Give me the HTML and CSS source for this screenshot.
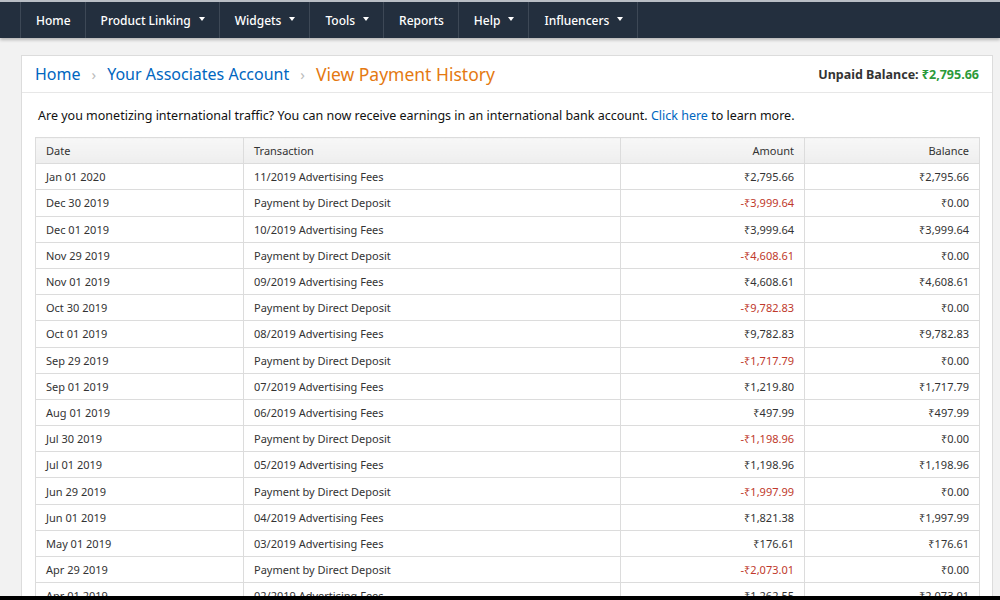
FILE: index.html
```html
<!DOCTYPE html>
<html lang="en">
<head>
    <meta charset="UTF-8">
    <title>View Payment History</title>
    <link rel="stylesheet" href="styles.css">
</head>
<body>
    <nav class="top-nav">
        <span class="nav-spacer"></span>
        <a class="nav-item" href="#">Home</a>
        <a class="nav-item" href="#">Product Linking <span class="caret"></span></a>
        <a class="nav-item" href="#">Widgets <span class="caret"></span></a>
        <a class="nav-item" href="#">Tools <span class="caret"></span></a>
        <a class="nav-item" href="#">Reports</a>
        <a class="nav-item" href="#">Help <span class="caret"></span></a>
        <a class="nav-item" href="#">Influencers <span class="caret"></span></a>
    </nav>

    <main class="page">
        <div class="card">
            <div class="card-header">
                <div class="breadcrumbs">
                    <a href="#">Home</a>
                    <span class="sep">&rsaquo;</span>
                    <a href="#">Your Associates Account</a>
                    <span class="sep">&rsaquo;</span>
                    <span class="current">View Payment History</span>
                </div>
                <div class="unpaid">Unpaid Balance: <span class="unpaid-amount">₹2,795.66</span></div>
            </div>

            <div class="card-body">
                <p class="notice">Are you monetizing international traffic? You can now receive earnings in an international bank account. <a href="#">Click here</a> to learn more.</p>

                <table class="history">
                    <colgroup>
                        <col class="col-date">
                        <col class="col-trans">
                        <col class="col-amount">
                        <col class="col-balance">
                    </colgroup>
                    <thead>
                        <tr>
                            <th>Date</th>
                            <th>Transaction</th>
                            <th class="num">Amount</th>
                            <th class="num">Balance</th>
                        </tr>
                    </thead>
                    <tbody>
                        <tr><td>Jan 01 2020</td><td>11/2019 Advertising Fees</td><td class="num">₹2,795.66</td><td class="num">₹2,795.66</td></tr>
                        <tr><td>Dec 30 2019</td><td>Payment by Direct Deposit</td><td class="num neg">-₹3,999.64</td><td class="num">₹0.00</td></tr>
                        <tr><td>Dec 01 2019</td><td>10/2019 Advertising Fees</td><td class="num">₹3,999.64</td><td class="num">₹3,999.64</td></tr>
                        <tr><td>Nov 29 2019</td><td>Payment by Direct Deposit</td><td class="num neg">-₹4,608.61</td><td class="num">₹0.00</td></tr>
                        <tr><td>Nov 01 2019</td><td>09/2019 Advertising Fees</td><td class="num">₹4,608.61</td><td class="num">₹4,608.61</td></tr>
                        <tr><td>Oct 30 2019</td><td>Payment by Direct Deposit</td><td class="num neg">-₹9,782.83</td><td class="num">₹0.00</td></tr>
                        <tr><td>Oct 01 2019</td><td>08/2019 Advertising Fees</td><td class="num">₹9,782.83</td><td class="num">₹9,782.83</td></tr>
                        <tr><td>Sep 29 2019</td><td>Payment by Direct Deposit</td><td class="num neg">-₹1,717.79</td><td class="num">₹0.00</td></tr>
                        <tr><td>Sep 01 2019</td><td>07/2019 Advertising Fees</td><td class="num">₹1,219.80</td><td class="num">₹1,717.79</td></tr>
                        <tr><td>Aug 01 2019</td><td>06/2019 Advertising Fees</td><td class="num">₹497.99</td><td class="num">₹497.99</td></tr>
                        <tr><td>Jul 30 2019</td><td>Payment by Direct Deposit</td><td class="num neg">-₹1,198.96</td><td class="num">₹0.00</td></tr>
                        <tr><td>Jul 01 2019</td><td>05/2019 Advertising Fees</td><td class="num">₹1,198.96</td><td class="num">₹1,198.96</td></tr>
                        <tr><td>Jun 29 2019</td><td>Payment by Direct Deposit</td><td class="num neg">-₹1,997.99</td><td class="num">₹0.00</td></tr>
                        <tr><td>Jun 01 2019</td><td>04/2019 Advertising Fees</td><td class="num">₹1,821.38</td><td class="num">₹1,997.99</td></tr>
                        <tr><td>May 01 2019</td><td>03/2019 Advertising Fees</td><td class="num">₹176.61</td><td class="num">₹176.61</td></tr>
                        <tr><td>Apr 29 2019</td><td>Payment by Direct Deposit</td><td class="num neg">-₹2,073.01</td><td class="num">₹0.00</td></tr>
                        <tr><td>Apr 01 2019</td><td>02/2019 Advertising Fees</td><td class="num">₹1,262.55</td><td class="num">₹2,073.01</td></tr>
                    </tbody>
                </table>
            </div>
        </div>
    </main>

    <div class="screen-edge"></div>
</body>
</html>
```

FILE: styles.css
```css
html, body {
    height: 100%;
}

body {
    margin: 0;
    display: flex;
    flex-direction: column;
    overflow: hidden;
    background: #f2f2f2;
    font-family: "Noto Sans", "Open Sans", sans-serif;
    color: #111;
}

a {
    text-decoration: none;
}

/* top navigation */
.top-nav {
    flex: none;
    display: flex;
    height: 36px;
    background: #232f3e;
    border-top: 2px solid #b9bec5;
    box-shadow: 0 2px 3px rgba(0, 0, 0, 0.25);
}

.nav-spacer {
    width: 20px;
    border-right: 1px solid #3d4856;
}

.nav-item {
    display: flex;
    align-items: center;
    gap: 8px;
    padding: 0 14px 0 15px;
    border-right: 1px solid #3d4856;
    color: #fff;
    font-size: 12px;
    font-weight: 500;
}

.caret {
    width: 0;
    height: 0;
    border-left: 3.5px solid transparent;
    border-right: 3.5px solid transparent;
    border-top: 4px solid #fff;
    margin-top: -2px;
}

/* page */
.page {
    flex: 1;
    min-height: 0;
    padding: 17px 7px 0 21px;
}

.card {
    background: #fff;
    border: 1px solid #dcdcdc;
    border-bottom: none;
    height: 100%;
}

.card-header {
    display: flex;
    align-items: center;
    justify-content: space-between;
    height: 36px;
    padding: 0 13px;
    border-bottom: 1px solid #e7e7e7;
}

.breadcrumbs {
    display: flex;
    align-items: center;
    gap: 11px;
    font-size: 16px;
}

.breadcrumbs a {
    color: #0066c0;
}

.breadcrumbs .sep {
    color: #bbb;
    font-size: 15px;
}

.breadcrumbs .current {
    color: #e47911;
    font-size: 17.5px;
}

.unpaid {
    font-size: 12.5px;
    font-weight: 700;
    color: #333;
}

.unpaid-amount {
    color: #2b9a3a;
}

.card-body {
    padding: 0 13px;
}

.notice {
    margin: 14px 3px 12px;
    font-size: 12.5px;
    line-height: 18px;
    color: #111;
}

.notice a {
    color: #0066c0;
}

/* payment table */
.history {
    width: 100%;
    table-layout: fixed;
    border-collapse: collapse;
    font-size: 11px;
    color: #333;
}

.col-date { width: 208px; }
.col-trans { width: 377px; }
.col-amount { width: 184px; }
.col-balance { width: 175px; }

.history th,
.history td {
    height: 25.2px;
    padding: 0 10px;
    border: 1px solid #dcdcdc;
    text-align: left;
    font-weight: 400;
    white-space: nowrap;
}

.history th {
    background: linear-gradient(#f7f7f7, #eeeeee);
}

.history .num {
    text-align: right;
}

.history .neg {
    color: #c0392b;
}

.screen-edge {
    flex: none;
    height: 4px;
    background: #000;
}
```
